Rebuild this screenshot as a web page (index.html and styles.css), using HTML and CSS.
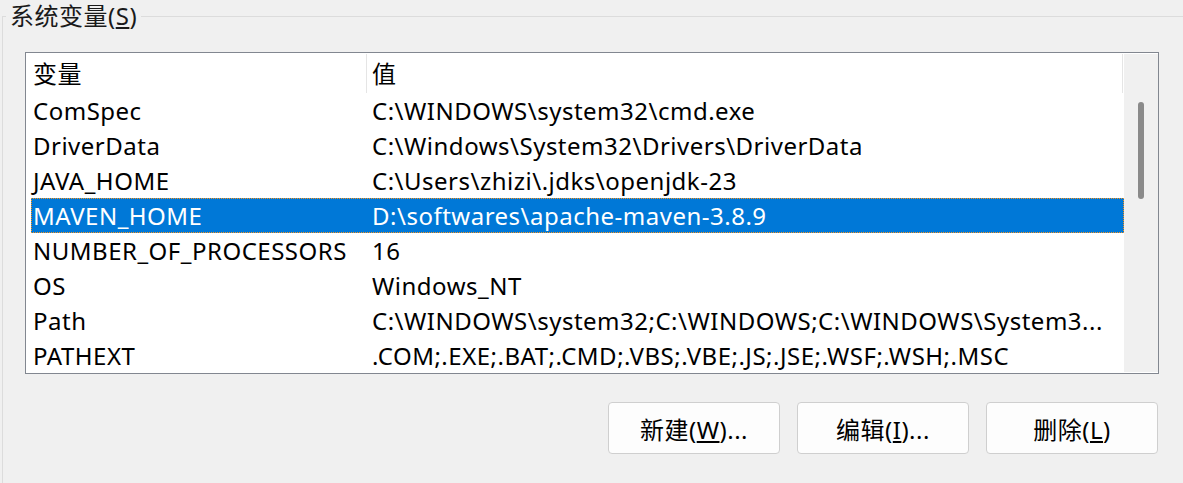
FILE: index.html
```html
<!DOCTYPE html>
<html lang="zh-CN">
<head>
<meta charset="utf-8">
<title>系统变量</title>
<link rel="stylesheet" href="styles.css">
</head>
<body>
<fieldset class="group">
  <legend class="group-title">系统变量(<u>S</u>)</legend>
  <div class="listbox">
    <div class="list">
      <div class="header">
        <div class="hcell hc1">变量</div>
        <div class="hcell hc2">值</div>
      </div>
      <div class="row"><span class="c1">ComSpec</span><span class="c2">C:\WINDOWS\system32\cmd.exe</span></div>
      <div class="row"><span class="c1">DriverData</span><span class="c2">C:\Windows\System32\Drivers\DriverData</span></div>
      <div class="row"><span class="c1">JAVA_HOME</span><span class="c2">C:\Users\zhizi\.jdks\openjdk-23</span></div>
      <div class="row selected"><span class="c1">MAVEN_HOME</span><span class="c2">D:\softwares\apache-maven-3.8.9</span></div>
      <div class="row"><span class="c1">NUMBER_OF_PROCESSORS</span><span class="c2">16</span></div>
      <div class="row"><span class="c1">OS</span><span class="c2">Windows_NT</span></div>
      <div class="row"><span class="c1">Path</span><span class="c2">C:\WINDOWS\system32;C:\WINDOWS;C:\WINDOWS\System3...</span></div>
      <div class="row"><span class="c1">PATHEXT</span><span class="c2">.COM;.EXE;.BAT;.CMD;.VBS;.VBE;.JS;.JSE;.WSF;.WSH;.MSC</span></div>
    </div>
    <div class="scrollbar"><div class="thumb"></div></div>
  </div>
  <div class="buttons">
    <button class="btn">新建(<u>W</u>)...</button>
    <button class="btn">编辑(<u>I</u>)...</button>
    <button class="btn">删除(<u>L</u>)</button>
  </div>
</fieldset>
</body>
</html>
```

FILE: styles.css
```css
html, body {
  margin: 0;
  padding: 0;
  background: #f0f0f0;
  overflow: hidden;
  height: 100%;
}

body {
  font-family: "Noto Sans", "Noto Sans CJK SC", sans-serif;
  font-size: 24px;
  letter-spacing: 0.5px;
  color: #000;
}

.group {
  margin: 0 0 0 2px;
  padding: 0;
  border: 1px solid #dcdcdc;
  border-right: none;
  border-bottom: none;
  min-width: 0;
  height: 483px;
  box-sizing: border-box;
}

.group-title {
  margin-left: 3px;
  padding: 0 4px;
  line-height: 32px;
  color: #1a1a1a;
}

.listbox {
  display: flex;
  width: 1134px;
  height: 322px;
  margin: 20px 0 0 22px;
  box-sizing: border-box;
  border: 1px solid #828790;
  background: #fff;
  padding: 1px 0;
}

.list {
  flex: 1;
  padding-left: 5px;
  overflow: hidden;
}

.header {
  display: flex;
  height: 39px;
}

.hcell {
  box-sizing: border-box;
  border-right: 1px solid #e5e5e5;
  line-height: 39px;
  white-space: nowrap;
}

.hc1 {
  width: 336px;
  padding-left: 2px;
}

.hc2 {
  width: 756px;
  padding-left: 5px;
}

.row {
  display: flex;
  height: 35px;
  line-height: 35px;
  white-space: nowrap;
  box-sizing: border-box;
}

.row .c1 {
  width: 336px;
  padding-left: 2px;
  box-sizing: border-box;
}

.row .c2 {
  padding-left: 5px;
}

.row.selected {
  background: #0078d7;
  color: #fff;
  outline: 1px dotted #f7931e;
  outline-offset: -1px;
}

.scrollbar {
  width: 34px;
  background: #f0f0f0;
  display: flex;
  justify-content: center;
  padding-top: 48px;
  box-sizing: border-box;
}

.thumb {
  width: 6px;
  height: 97px;
  border-radius: 3px;
  background: #8a8a8a;
}

.buttons {
  display: flex;
  justify-content: flex-end;
  gap: 17px;
  width: 1133px;
  margin: 28px 0 0 22px;
}

.btn {
  width: 172px;
  height: 52px;
  box-sizing: border-box;
  border: 1px solid #cfcfcf;
  border-radius: 4px;
  background: #fdfdfd;
  font-family: "Noto Sans", "Noto Sans CJK SC", sans-serif;
  font-size: 24px;
  letter-spacing: 0.5px;
  color: #000;
  padding: 0;
}
```
